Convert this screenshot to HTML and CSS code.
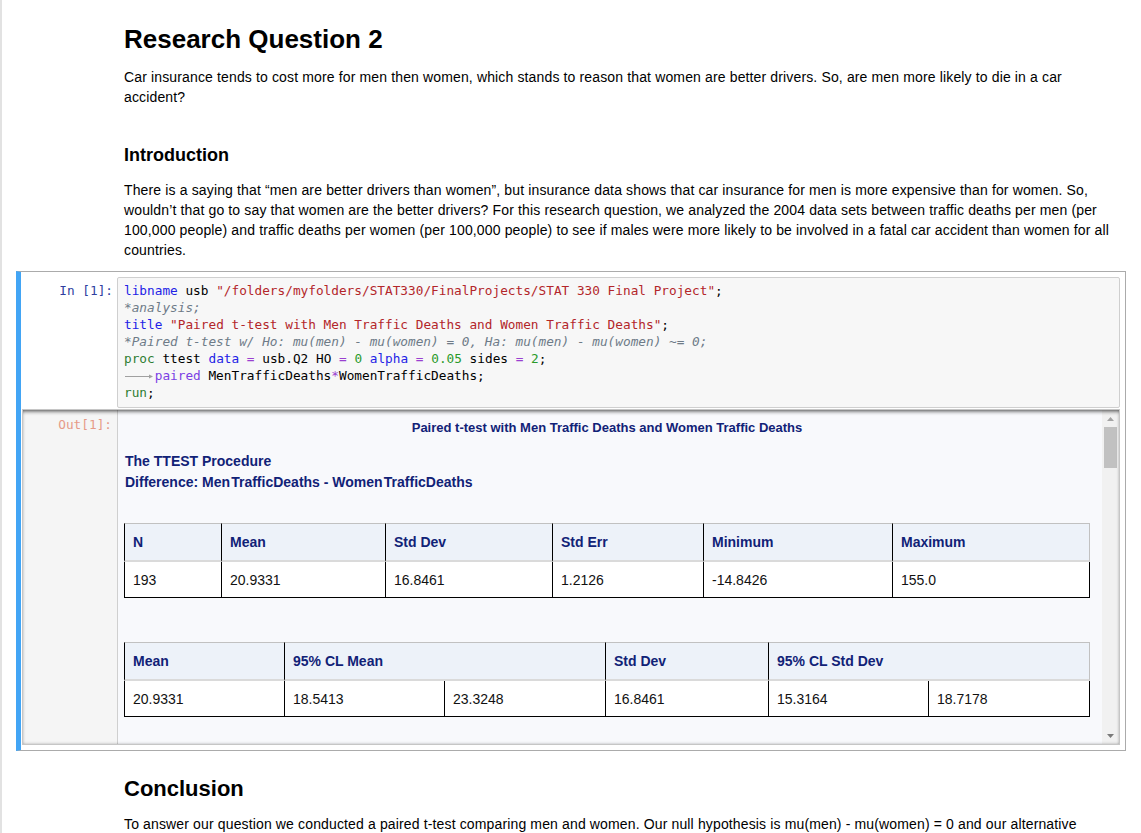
FILE: index.html
```html
<!DOCTYPE html>
<html>
<head>
<meta charset="utf-8">
<title>Research Question 2</title>
<link rel="stylesheet" href="styles.css">
</head>
<body>
<div class="page">
  <div class="md">
    <h1>Research Question 2</h1>
    <p class="p1">Car insurance tends to cost more for men then women, which stands to reason that women are better drivers. So, are men more likely to die in a car accident?</p>
    <h3>Introduction</h3>
    <p class="p2">There is a saying that “men are better drivers than women”, but insurance data shows that car insurance for men is more expensive than for women. So, wouldn’t that go to say that women are the better drivers? For this research question, we analyzed the 2004 data sets between traffic deaths per men (per 100,000 people) and traffic deaths per women (per 100,000 people) to see if males were more likely to be involved in a fatal car accident than women for all countries.</p>
  </div>

  <div class="cell">
    <div class="input">
      <div class="prompt in">In&nbsp;[1]:</div>
<pre class="code"><span class="kw">libname</span> usb <span class="str">"/folders/myfolders/STAT330/FinalProjects/STAT 330 Final Project"</span>;
<span class="cm">*analysis;</span>
<span class="kw">title</span> <span class="str">"Paired t-test with Men Traffic Deaths and Women Traffic Deaths"</span>;
<span class="cm">*Paired t-test w/ Ho: mu(men) - mu(women) = 0, Ha: mu(men) - mu(women) ~= 0;</span>
<span class="pr">proc</span> ttest <span class="kw">data</span> <span class="op">=</span> usb.Q2 HO <span class="op">=</span> <span class="num">0</span> <span class="kw">alpha</span> <span class="op">=</span> <span class="num">0.05</span> sides <span class="op">=</span> <span class="num">2</span>;
<span class="tab"><svg width="31" height="17" viewBox="0 0 31 17"><path d="M1 9.5H28" stroke="#a0a0a0" stroke-width="1"/><path d="M25 7.5L29 9.5L25 11.5Z" fill="#a0a0a0"/></svg></span><span class="kw2">paired</span> MenTrafficDeaths<span class="op">*</span>WomenTrafficDeaths;
<span class="pr">run</span>;</pre>
    </div>
    <div class="output">
      <div class="prompt out">Out[1]:</div>
      <div class="result">
        <div class="sas-title">Paired t-test with Men Traffic Deaths and Women Traffic Deaths</div>
        <div class="proc">
          <div>The TTEST Procedure</div>
          <div>Difference: Men&#8202;TrafficDeaths - Women&#8202;TrafficDeaths</div>
        </div>
        <table class="sas-table t1">
          <colgroup>
            <col class="w97"><col class="w164"><col class="w167"><col class="w151"><col class="w189"><col class="w198">
          </colgroup>
          <tr><th>N</th><th>Mean</th><th>Std Dev</th><th>Std Err</th><th>Minimum</th><th>Maximum</th></tr>
          <tr><td>193</td><td>20.9331</td><td>16.8461</td><td>1.2126</td><td>-14.8426</td><td>155.0</td></tr>
        </table>
        <table class="sas-table t2">
          <colgroup>
            <col class="w160"><col class="w160"><col class="w161"><col class="w163"><col class="w160"><col class="w162">
          </colgroup>
          <tr><th>Mean</th><th colspan="2">95% CL Mean</th><th>Std Dev</th><th colspan="2">95% CL Std Dev</th></tr>
          <tr><td>20.9331</td><td>18.5413</td><td>23.3248</td><td>16.8461</td><td>15.3164</td><td>18.7178</td></tr>
        </table>
      </div>
      <div class="scrollbar">
        <div class="sb-btn"><svg width="7" height="4" viewBox="0 0 7 4"><path d="M0 4L3.5 0L7 4Z" fill="#a3a3a3"/></svg></div>
        <div class="sb-thumb"></div>
        <div class="sb-space"></div>
        <div class="sb-btn"><svg width="7" height="4" viewBox="0 0 7 4"><path d="M0 0L3.5 4L7 0Z" fill="#7a7a7a"/></svg></div>
      </div>
    </div>
  </div>

  <div class="md">
    <h2>Conclusion</h2>
    <p class="p3">To answer our question we conducted a paired t-test comparing men and women. Our null hypothesis is mu(men) - mu(women) = 0 and our alternative hypothesis is mu(men) - mu(women) ~= 0.</p>
  </div>
</div>
</body>
</html>
```

FILE: styles.css
```css
html, body {
  margin: 0;
  padding: 0;
  overflow: hidden;
  background: #fff;
}

body {
  font-family: "Liberation Sans", Arial, sans-serif;
  font-size: 14px;
  color: #000;
}

.page {
  width: 1141px;
  height: 833px;
  box-sizing: border-box;
  border-left: 2px solid #e2e2e2;
  overflow: hidden;
}

.md {
  margin-left: 122px;
  width: 996px;
}

h1 {
  margin: 0;
  padding-top: 24px;
  font-size: 26px;
  line-height: 30px;
  font-weight: bold;
}

h2 {
  margin: 24px 0 0;
  font-size: 22px;
  line-height: 28px;
  font-weight: bold;
}

h3 {
  margin: 36px 0 0;
  font-size: 18px;
  line-height: 24px;
  font-weight: bold;
}

.md p {
  letter-spacing: 0.14px;
}

.p1, .p2 {
  margin: 13px 0 0;
  line-height: 20px;
}

.p3 {
  margin: 11px 0 0;
  line-height: 20px;
}

/* code cell */
.cell {
  margin: 11px 0 0 14px;
  width: 1110px;
  box-sizing: border-box;
  border: 1px solid #ababab;
  border-left: 5px solid #42a5f5;
  padding: 5px;
}

.input {
  display: flex;
}

.prompt {
  font-family: "DejaVu Sans Mono", monospace;
  font-size: 12.75px;
  line-height: 17px;
  text-align: right;
  box-sizing: border-box;
  flex: none;
}

.prompt.in {
  width: 91px;
  padding: 5px 4px 0 0;
  color: #303f9f;
}

.code {
  flex: 1;
  margin: 0;
  border: 1px solid #cfcfcf;
  border-radius: 2px;
  background: #f7f7f7;
  padding: 4px 6px 6px;
  font-family: "DejaVu Sans Mono", monospace;
  font-size: 12.75px;
  line-height: 17px;
  color: #000;
  white-space: pre;
  overflow: hidden;
}

.kw { color: #2323e6; }
.kw2 { color: #7b3fe4; }
.pr { color: #2e7d32; }
.str { color: #b3262a; }
.cm { color: #6e7b88; font-style: italic; }
.op { color: #9a40d0; }
.num { color: #2a9a2a; }

.tab {
  display: inline-block;
  width: 4ch;
  height: 17px;
  vertical-align: top;
}

.tab svg {
  display: block;
}

/* output */
.output {
  position: relative;
  display: flex;
  margin: 1px 0 0 -4px;
  height: 336px;
  box-sizing: border-box;
  border: 1px solid #c6c6c6;
}

.output::after {
  content: "";
  position: absolute;
  inset: 0;
  box-shadow: inset 0 3px 4px -2px rgba(0, 0, 0, 0.75), inset 0 -2px 3px -2px rgba(0, 0, 0, 0.3);
  pointer-events: none;
}

.prompt.out {
  width: 95px;
  padding: 6px 5px 0 0;
  background: #f5f5f5;
  border-right: 1px solid #cfcfcf;
  color: #e69a87;
}

.result {
  flex: 1;
  min-width: 0;
  background: #f8f9fc;
  padding: 9px 6px 0;
  overflow: hidden;
  font-family: "Liberation Sans", Arial, sans-serif;
  font-size: 13px;
}

.sas-title {
  margin-left: -6px;
  text-align: center;
  font-weight: bold;
  color: #112277;
  line-height: 17px;
}

.proc {
  margin: 15px 0 0 1px;
  font-size: 14px;
  font-weight: bold;
  color: #112277;
  line-height: 21px;
}

.sas-table {
  border-collapse: separate;
  border-spacing: 0;
  table-layout: fixed;
  width: 966px;
}

.t1 { margin-top: 30px; }
.t2 { margin-top: 44px; }

.sas-table th,
.sas-table td {
  box-sizing: border-box;
  text-align: left;
  padding: 0 0 0 8px;
  font-size: 14px;
  white-space: nowrap;
}

.sas-table th {
  height: 39px;
  background: #edf2f9;
  color: #112277;
  font-weight: bold;
  border-top: 1px solid #c1c1c1;
  border-left: 1px solid #000;
  border-bottom: 2px solid #dadada;
}

.sas-table th:last-child {
  border-right: 1px solid #c1c1c1;
}

.sas-table td {
  height: 36px;
  background: #fff;
  color: #111;
  border-left: 1px solid #000;
  border-bottom: 1px solid #000;
}

.sas-table td:last-child {
  border-right: 1px solid #000;
}

.w97 { width: 97px; }
.w151 { width: 151px; }
.w160 { width: 160px; }
.w161 { width: 161px; }
.w162 { width: 162px; }
.w163 { width: 163px; }
.w164 { width: 164px; }
.w167 { width: 167px; }
.w189 { width: 189px; }
.w198 { width: 198px; }

/* fake scrollbar */
.scrollbar {
  width: 17px;
  flex: none;
  display: flex;
  flex-direction: column;
  background: #f1f1f1;
}

.sb-btn {
  height: 17px;
  display: flex;
  align-items: center;
  justify-content: center;
}

.sb-btn svg {
  display: block;
}

.sb-thumb {
  height: 41px;
  margin: 0 2px;
  background: #c1c1c1;
}

.sb-space {
  flex: 1;
}
```
